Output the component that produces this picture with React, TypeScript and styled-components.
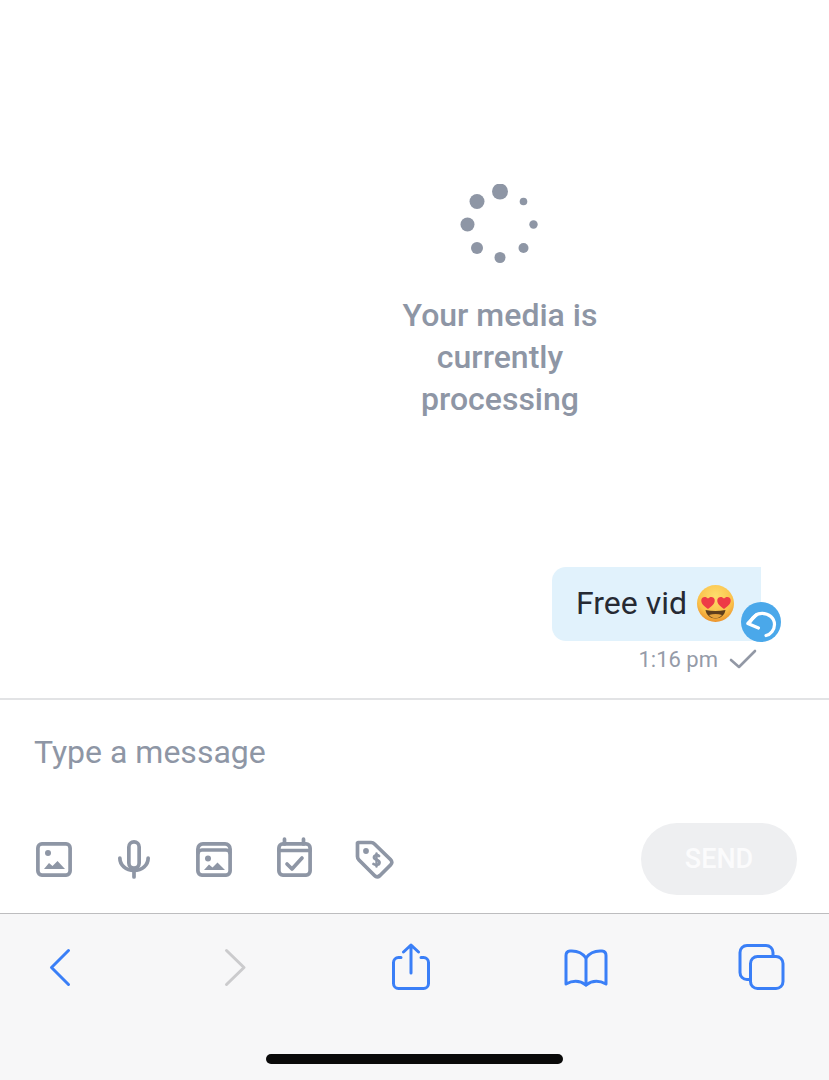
import styled, { createGlobalStyle } from "styled-components";

const GlobalStyle = createGlobalStyle`
  html, body {
    margin: 0;
    padding: 0;
    background: #fff;
  }
  * {
    box-sizing: border-box;
  }
`;

const Page = styled.div`
  width: 829px;
  height: 1080px;
  display: flex;
  flex-direction: column;
  overflow: hidden;
  background: #fff;
  font-family: Roboto, "Liberation Sans", sans-serif;
`;

const Thread = styled.main`
  height: 698px;
  display: flex;
  flex-direction: column;
  padding-top: 184px;
`;

const Processing = styled.section`
  display: flex;
  flex-direction: column;
  align-items: center;
  padding-left: 171px;
`;

const ProcessingText = styled.p`
  width: 240px;
  margin: 30px 0 0;
  color: #8e96a5;
  font-size: 32px;
  font-weight: 500;
  line-height: 42px;
  text-align: center;
`;

const MessageBlock = styled.div`
  margin-top: 147px;
  padding-right: 68px;
  display: flex;
  flex-direction: column;
  align-items: flex-end;
`;

const Bubble = styled.div`
  position: relative;
  width: 209px;
  height: 74px;
  padding: 0 0 2px 24px;
  display: flex;
  align-items: center;
  gap: 10px;
  background: #e1f2fc;
  border-radius: 14px 0 0 14px;
  color: #262a33;
  font-size: 32px;
  line-height: 70px;
`;

const ReplyBadge = styled.span`
  position: absolute;
  right: -20px;
  bottom: -1px;
  width: 40px;
  height: 40px;
  border-radius: 50%;
  background: #4aa8ea;
  display: flex;
  align-items: center;
  justify-content: center;
`;

const Meta = styled.div`
  margin-top: 5px;
  height: 26px;
  padding-right: 3px;
  display: flex;
  align-items: center;
  gap: 10px;
  color: #959ba8;
  font-size: 22px;
`;

const Composer = styled.section`
  height: 215px;
  border-top: 2px solid #e2e3e5;
  padding: 33px 32px 0 34px;
`;

const Placeholder = styled.div`
  height: 40px;
  color: #8e96a5;
  font-size: 32px;
  line-height: 38px;
`;

const ToolRow = styled.div`
  margin-top: 50px;
  display: flex;
  align-items: center;
  justify-content: space-between;
`;

const Tools = styled.div`
  display: flex;
  align-items: center;
  gap: 40px;
`;

const SendButton = styled.button`
  width: 156px;
  height: 72px;
  border: 0;
  border-radius: 36px;
  background: #eeeff1;
  color: #fbfbfc;
  font-family: inherit;
  font-size: 27px;
  font-weight: 500;
`;

const SafariBar = styled.nav`
  flex: 1;
  position: relative;
  border-top: 1px solid #bdbdbf;
  background: #f7f7f8;
  padding: 29px 0 0 49px;
  display: grid;
  grid-template-columns: 174px 168px 173px 174px auto;
  align-items: start;
  justify-items: start;
`;

const HomeIndicator = styled.div`
  position: absolute;
  left: 266px;
  bottom: 16px;
  width: 297px;
  height: 10px;
  border-radius: 5px;
  background: #0a0a0a;
`;

const Spinner = () => {
  const dots = [
    [500, 191.5, 8],
    [523.5, 201.5, 3.8],
    [533.5, 224.5, 4.2],
    [523.5, 248, 5],
    [500, 257.5, 5.5],
    [477, 248, 6],
    [467.5, 224.5, 7],
    [477, 201.5, 7.5],
  ];
  return (
    <svg width="80" height="80" viewBox="460 184 80 80">
      {dots.map(([cx, cy, r]) => (
        <circle key={cx * cy} cx={cx} cy={cy} r={r} fill="#8e96a5" />
      ))}
    </svg>
  );
};

const HeartEyes = () => (
  <svg width="37" height="37" viewBox="0 0 37 37">
    <defs>
      <radialGradient id="face" cx="50%" cy="30%" r="72%">
        <stop offset="0%" stopColor="#fedd6c" />
        <stop offset="68%" stopColor="#fac04a" />
        <stop offset="100%" stopColor="#ea8f2a" />
      </radialGradient>
    </defs>
    <circle cx="18.5" cy="18.5" r="18.5" fill="url(#face)" />
    <path d="M8.500 25c6.500 1.300 13.500 1.300 20 0-1 5.500-5 8.500-10 8.500s-9-3-10-8.500z" fill="#5f3e1c" />
    <path d="M12 30c4-1.500 9-1.500 13 0-2 2.200-4 3.200-6.500 3.200s-4.500-1-6.500-3.200z" fill="#e5a23c" />
    <path d="M11 24c-3.500-2.500-7-5-6.700-9 .3-3.300 4.500-4.200 6.700-1.500 2.200-2.700 6.400-1.800 6.700 1.500.3 4-3.200 6.500-6.700 9z" fill="#ee3b46" />
    <path d="M27 24c-3.500-2.500-7-5-6.700-9 .3-3.300 4.500-4.200 6.700-1.500 2.200-2.700 6.400-1.800 6.700 1.500.3 4-3.200 6.500-6.700 9z" fill="#ee3b46" />
  </svg>
);

const ReplyIcon = () => (
  <svg width="32" height="32" viewBox="0 0 32 32" fill="none" stroke="#fff" strokeWidth="3.200" strokeLinecap="round" strokeLinejoin="round">
    <path d="M11.700 8.500 2.800 17.500 13.500 22" />
    <path d="M5 16C8 10 12 7.300 17 7.300c7 0 12.500 4.700 12.500 11.200 0 5.500-4 10-8.500 11" />
  </svg>
);

const CheckIcon = () => (
  <svg width="30" height="24" viewBox="0 0 30 24" fill="none" stroke="#9298a5" strokeWidth="2.600" strokeLinecap="round" strokeLinejoin="round">
    <path d="M3 13 11 20 27 4" />
  </svg>
);

const ToolIcon = styled.svg.attrs({
  viewBox: "0 0 40 40",
  fill: "none",
  stroke: "#8e96a5",
  strokeWidth: 3.7,
  strokeLinecap: "round",
  strokeLinejoin: "round",
})`
  width: 40px;
  height: 40px;
  display: block;
  overflow: visible;
`;

const SafariIcon = styled.svg.attrs<{ $tone?: string }>((p) => ({
  fill: "none",
  stroke: p.$tone ?? "#3a7ff7",
  strokeWidth: 3,
  strokeLinecap: "round",
  strokeLinejoin: "round",
}))<{ $tone?: string }>`
  display: block;
`;

const App = () => {
  return (
    <>
      <GlobalStyle />
      <Page>
        <Thread>
          <Processing>
            <Spinner />
            <ProcessingText>Your media is currently processing</ProcessingText>
          </Processing>
          <MessageBlock>
            <Bubble>
              Free vid
              <HeartEyes />
              <ReplyBadge>
                <ReplyIcon />
              </ReplyBadge>
            </Bubble>
            <Meta>
              1:16 pm
              <CheckIcon />
            </Meta>
          </MessageBlock>
        </Thread>

        <Composer>
          <Placeholder>Type a message</Placeholder>
          <ToolRow>
            <Tools>
              <ToolIcon>
                <rect x="3.900" y="4.900" width="32.200" height="31.200" rx="4" />
                <circle cx="14" cy="14" r="3" fill="#8e96a5" stroke="none" />
                <path d="M10 30l5-6 3.500 3 5-5 7.500 8z" fill="#8e96a5" stroke="none" />
              </ToolIcon>
              <ToolIcon>
                <rect x="14.850" y="2.850" width="10.300" height="26.300" rx="5.150" />
                <path d="M5.850 19c0 7 6 12.500 14.150 12.500S34.150 26 34.150 19" />
                <path d="M20 32v6" />
              </ToolIcon>
              <ToolIcon>
                <path d="M3.900 14v-4a5 5 0 0 1 5-5.100h22.200a5 5 0 0 1 5 5.100v4" />
                <rect x="3.900" y="11" width="32.200" height="25.100" rx="4" />
                <circle cx="14" cy="19.500" r="3" fill="#8e96a5" stroke="none" />
                <path d="M10 31l5-5.500 3.500 3 5-5 7.500 7.500z" fill="#8e96a5" stroke="none" />
              </ToolIcon>
              <ToolIcon>
                <rect x="4.900" y="4.900" width="31.200" height="31.200" rx="4" />
                <path d="M4.900 11.500h31.200M10.500 0v5M29.500 0v5" />
                <path d="M13 25l5 5 10-11" />
              </ToolIcon>
              <ToolIcon>
                <path d="M4 3.500h13c1.500 0 2.500.4 3.500 1.500l16 15.500c1.800 1.800 1.800 4 0 5.500L26 36.500c-1.800 1.600-4 1.600-5.500 0L5 21c-1-1-1.500-2-1.500-3.500V4z" />
                <circle cx="12" cy="12" r="2.900" fill="#8e96a5" stroke="none" />
                <path d="M25 17c-1.500-1.500-5-1-5 1.500s5.500 2 5.500 5c0 2.500-4 3-6 1.500" strokeWidth="2.800" />
                <path d="M22.500 14.500v13" strokeWidth="2.400" />
              </ToolIcon>
            </Tools>
            <SendButton>SEND</SendButton>
          </ToolRow>
        </Composer>

        <SafariBar>
          <SafariIcon width="24" height="50" viewBox="0 0 24 50">
            <path d="M19.500 7.500 2.500 24.500l17 17" />
          </SafariIcon>
          <SafariIcon $tone="#cbcbcd" width="24" height="50" viewBox="0 0 24 50">
            <path d="M3.500 7.500 21 24.500 3.500 41.500" />
          </SafariIcon>
          <SafariIcon width="40" height="50" viewBox="0 0 40 50">
            <path d="M10 14.500H7.500a5 5 0 0 0-5 5v21a5 5 0 0 0 5 5h25a5 5 0 0 0 5-5v-21a5 5 0 0 0-5-5H30" />
            <path d="M20 30V2M12.500 9 20 2l7.500 7" />
          </SafariIcon>
          <SafariIcon width="44" height="50" viewBox="0 0 44 50">
            <path d="M22 15C18.500 10 12.500 7.500 6 8 3 8.300 2 10 2 12.500V41c6.500-3.500 14-3.500 20 1 6-4.500 13.500-4.500 20-1V12.500c0-2.500-1-4.200-4-4.500C31.500 7.500 25.500 10 22 15z" />
            <path d="M22 15v27" />
          </SafariIcon>
          <SafariIcon width="47" height="50" viewBox="0 0 47 50">
            <path d="M11 36.500H9a7 7 0 0 1-7-7v-20a7 7 0 0 1 7-7h19a7 7 0 0 1 7 7V12" />
            <rect x="12.500" y="13.500" width="32.500" height="32" rx="7" />
          </SafariIcon>
          <HomeIndicator />
        </SafariBar>
      </Page>
    </>
  );
};

export default App;
